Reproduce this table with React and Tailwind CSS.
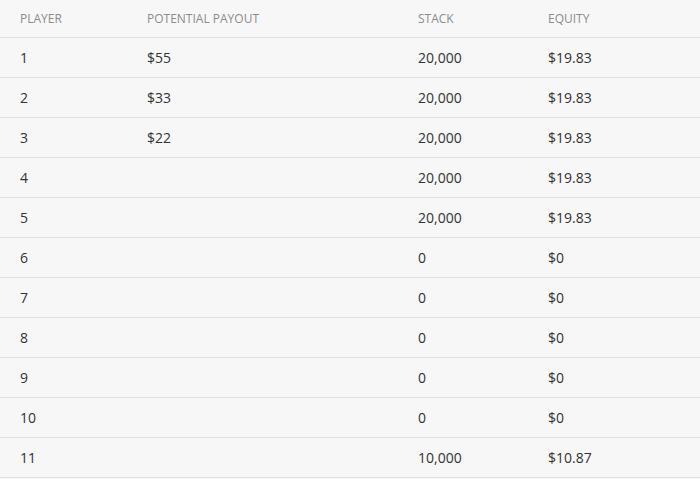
const rows = [
  ["1", "$55", "20,000", "$19.83"],
  ["2", "$33", "20,000", "$19.83"],
  ["3", "$22", "20,000", "$19.83"],
  ["4", "", "20,000", "$19.83"],
  ["5", "", "20,000", "$19.83"],
  ["6", "", "0", "$0"],
  ["7", "", "0", "$0"],
  ["8", "", "0", "$0"],
  ["9", "", "0", "$0"],
  ["10", "", "0", "$0"],
  ["11", "", "10,000", "$10.87"],
];

const App = () => {
  return (
    <div className="w-[700px] h-[479px] bg-[#f7f7f7] font-['Open_Sans',sans-serif] overflow-hidden">
      <div className="grid grid-cols-[147px_271px_130px_1fr] h-[38px] items-center border-b border-[#e3e3e3] text-[12px] text-[#8c8c8c] uppercase">
        <div className="pl-[20px]">Player</div>
        <div>Potential Payout</div>
        <div>Stack</div>
        <div>Equity</div>
      </div>
      {rows.map((r) => (
        <div
          key={r[0]}
          className="grid grid-cols-[147px_271px_130px_1fr] h-[40px] items-center border-b border-[#e3e3e3] text-[14px] text-[#333]"
        >
          <div className="pl-[20px]">{r[0]}</div>
          <div>{r[1]}</div>
          <div>{r[2]}</div>
          <div>{r[3]}</div>
        </div>
      ))}
    </div>
  );
};

export default App;
